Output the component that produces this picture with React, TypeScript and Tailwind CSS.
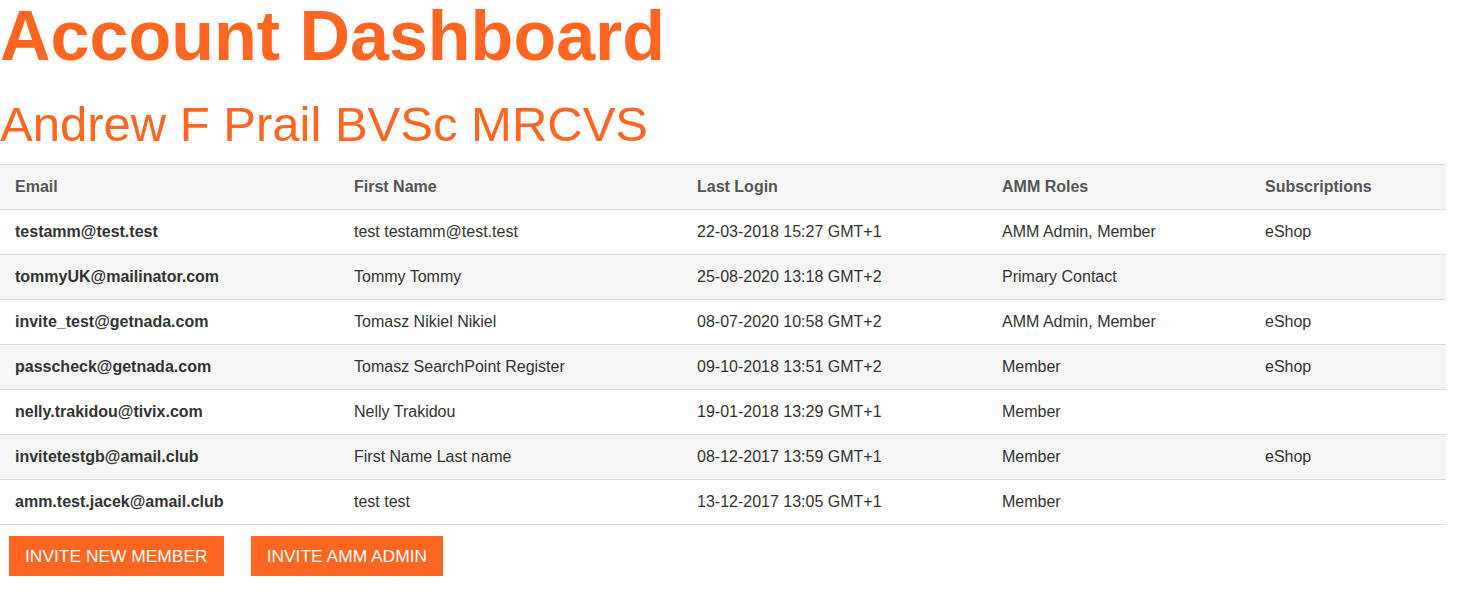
const rows = [
  ['testamm@test.test', 'test testamm@test.test', '22-03-2018 15:27 GMT+1', 'AMM Admin, Member', 'eShop'],
  ['tommyUK@mailinator.com', 'Tommy Tommy', '25-08-2020 13:18 GMT+2', 'Primary Contact', ''],
  ['invite_test@getnada.com', 'Tomasz Nikiel Nikiel', '08-07-2020 10:58 GMT+2', 'AMM Admin, Member', 'eShop'],
  ['passcheck@getnada.com', 'Tomasz SearchPoint Register', '09-10-2018 13:51 GMT+2', 'Member', 'eShop'],
  ['nelly.trakidou@tivix.com', 'Nelly Trakidou', '19-01-2018 13:29 GMT+1', 'Member', ''],
  ['invitetestgb@amail.club', 'First Name Last name', '08-12-2017 13:59 GMT+1', 'Member', 'eShop'],
  ['amm.test.jacek@amail.club', 'test test', '13-12-2017 13:05 GMT+1', 'Member', ''],
]

const headers = ['Email', 'First Name', 'Last Login', 'AMM Roles', 'Subscriptions']
const widths = ['w-[339px]', 'w-[343px]', 'w-[305px]', 'w-[263px]', 'w-[196px]']

export default function App() {
  return (
    <div className="min-h-screen bg-white font-['Liberation_Sans',Arial,sans-serif]">
      {/* Titles */}
      <h1 className="text-[70px] font-bold leading-[80px] text-[#ff6621] -mt-[4px]">Account Dashboard</h1>
      <h2 className="text-[49px] leading-[1.1] text-[#ff6621] mt-[22px]">Andrew F Prail BVSc MRCVS</h2>

      {/* Members table */}
      <table className="mt-[12px] w-[1446px] border-collapse text-[16px] table-fixed">
        <thead>
          <tr className="bg-[#f6f6f6] border-t border-b border-[#dddddd]">
            {headers.map((h, i) => (
              <th
                key={h}
                className={`${widths[i]} h-[45px] px-[15px] text-left font-bold text-[#555555]`}
              >
                {h}
              </th>
            ))}
          </tr>
        </thead>
        <tbody>
          {rows.map((r, idx) => (
            <tr
              key={r[0]}
              className={`border-b border-[#dddddd] ${idx % 2 === 1 ? 'bg-[#f6f6f6]' : 'bg-white'}`}
            >
              {r.map((c, i) => (
                <td
                  key={i}
                  className={`h-[45px] px-[15px] text-[#333333] ${i === 0 ? 'font-bold' : ''}`}
                >
                  {c}
                </td>
              ))}
            </tr>
          ))}
        </tbody>
      </table>

      {/* Actions */}
      <div className="flex gap-[27px] pl-[9px] mt-[11px]">
        <button className="h-[40px] px-[16px] bg-[#ff6621] text-white text-[17.4px] uppercase">
          Invite new member
        </button>
        <button className="h-[40px] px-[16px] bg-[#ff6621] text-white text-[17.4px] uppercase">
          Invite AMM admin
        </button>
      </div>
    </div>
  )
}
